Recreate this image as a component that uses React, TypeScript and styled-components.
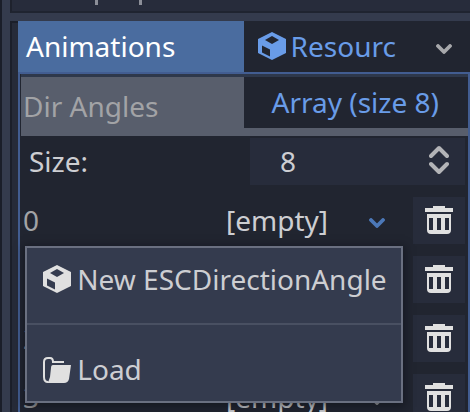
import React from "react";
import styled, { createGlobalStyle } from "styled-components";

const Global = createGlobalStyle`
  * { box-sizing: border-box; }
  body { margin: 0; overflow: hidden; background: #343b4d; }
  svg { display: block; flex: none; }
`;

const Dock = styled.main`
  position: relative;
  width: 470px;
  height: 412px;
  overflow: hidden;
  padding-left: 8px;
  border-left: 2px solid #1a1e29;
  background: #343b4d;
  color: #cdced2;
  font: 28px/38px "Noto Sans", sans-serif;
  white-space: nowrap;
`;

const FilterBar = styled.div`
  display: flex;
  height: 13px;
  padding-left: 83px;
  gap: 41px;
  border-left: 2px solid #1e222d;
  border-bottom: 2px solid #1f2430;
  background: #272c3b;
`;

const Descender = styled.i`
  width: 3px;
  height: 5px;
  background: #8c8f98;
`;

const Inspector = styled.section`
  height: 391px;
  margin-top: 8px;
  padding-left: 6px;
  border-left: 2px solid #1b1f2a;
  background: linear-gradient(#1b1f2a 2px, #262b39 2px);
`;

const PropertyRow = styled.div`
  display: flex;
  height: 51px;
`;

const Name = styled.div`
  width: 226px;
  padding: 6px 0 0 8px;
  background: #4a6c9f;
  color: #fff;
`;

const Value = styled.div`
  display: flex;
  flex: 1;
  padding-left: 14px;
  background: #212530;
  color: #699ce8;
`;

const Label = styled.span<{ $top?: number; $left?: number }>`
  display: block;
  margin-top: ${(p) => p.$top ?? 0}px;
  margin-left: ${(p) => p.$left ?? 0}px;
`;

const Resource = styled.div`
  height: 340px;
  border: 2px solid #425d91;
  border-bottom: 0;
  padding-left: 1px;
  background: #212530;
`;

const ArrayHeader = styled.div`
  display: flex;
  height: 62px;
  border-top: 3px solid #2e384b;
  background: #585e6c;
`;

const ArrayName = styled.div`
  width: 223px;
  padding: 10px 0 0 2px;
  color: #a2a3a6;
`;

const ArrayValue = styled.div`
  flex: 1;
  height: 51px;
  padding: 6px 0 0 27.5px;
  background: #212530;
  color: #699ce8;
`;

const SizeRow = styled.div`
  display: flex;
  height: 61px;
  padding: 2px 3px 12px 8px;
`;

const SizeName = styled.div`
  width: 221px;
  padding-top: 4px;
`;

const Spin = styled.div`
  display: flex;
  width: 215px;
  height: 47px;
  padding: 4px 16px 0 30px;
  justify-content: space-between;
  background: #272c3b;
`;

const SpinArrows = styled.svg`
  margin-top: 1px;
`;

const Item = styled.div`
  display: flex;
  height: 59px;
  padding-right: 3px;
`;

const Index = styled.div`
  width: 205px;
  padding: 4px 0 0 2px;
  color: #a2a3a6;
`;

const Empty = styled.div`
  display: flex;
  width: 187px;
  padding-top: 4px;
`;

const Delete = styled.div`
  width: 52px;
  height: 47px;
  padding: 9px 12px;
  background: #272c3b;
`;

const Menu = styled.div`
  position: absolute;
  left: 23px;
  top: 246px;
  width: 378px;
  height: 157px;
  border: 2px solid #6a7081;
  background: #343b4e;
  box-shadow: 0 2px 8px 2px rgba(12, 14, 22, 0.5);
`;

const MenuItem = styled.div<{ $height: number; $top: number }>`
  display: flex;
  height: ${(p) => p.$height}px;
  padding: ${(p) => p.$top}px 0 0 16px;
`;

const Separator = styled.div`
  height: 2px;
  background: #495062;
`;

const Tint = styled.span<{ $color?: string; $top?: number }>`
  margin-top: ${(p) => p.$top ?? 0}px;
  color: ${(p) => p.$color ?? "#e0e0e0"};
`;

const ChevronSvg = styled.svg<{ $top: number; $left: number }>`
  margin-top: ${(p) => p.$top}px;
  margin-left: ${(p) => p.$left}px;
`;

const Cube = () => (
  <svg width="28" height="28" viewBox="0 0 28 28" fill="currentColor">
    <path fillRule="evenodd" d="M14 0 28 7V21L14 28 0 21V7ZM14 4 7 8 14 12 21 8ZM4 13.5V20.5L12 24.5V17.5Z" />
  </svg>
);

const Folder = () => (
  <svg width="28" height="27" viewBox="0 0 28 27">
    <path d="M5 25C2 25 1 23 1 20V5Q1 1 5 1H7Q10 1 10 5H21" fill="none" stroke="currentColor" strokeWidth="2" />
    <path d="M10 8H28L26 22Q25 26 21 26H4Q6 24 7 20L8 11Q8 8 10 8Z" fill="currentColor" />
  </svg>
);

const Trash = () => (
  <svg width="28" height="28" viewBox="0 0 28 28" fill="#e0e0e0">
    <path d="M8 0H20V2H28V6H0V2H8Z" />
    <path fillRule="evenodd" d="M2 8H26V24Q26 28 22 28H6Q2 28 2 24ZM4 12V24H8V12ZM12 12V24H16V12ZM20 12V24H24V12Z" />
  </svg>
);

const Chevron = ({ color, top, left }: { color: string; top: number; left: number }) => (
  <ChevronSvg $top={top} $left={left} width="16" height="10" viewBox="0 0 16 10">
    <path d="m2 2 6 6 6-6" fill="none" stroke={color} strokeWidth="3.8" strokeLinecap="round" strokeLinejoin="round" />
  </ChevronSvg>
);

export default function App() {
  return (
    <>
      <Global />
      <Dock>
        <FilterBar>
          <Descender />
          <Descender />
        </FilterBar>
        <Inspector>
          <PropertyRow>
            <Name>Animations</Name>
            <Value>
              <Tint $color="#699ce8" $top={11}><Cube /></Tint>
              <Label $top={6} $left={4.6}>Resourc</Label>
              <Chevron color="#a7a8ab" top={23} left={40.4} />
            </Value>
          </PropertyRow>
          <Resource>
            <ArrayHeader>
              <ArrayName>Dir Angles</ArrayName>
              <ArrayValue>Array (size 8)</ArrayValue>
            </ArrayHeader>
            <SizeRow>
              <SizeName>Size:</SizeName>
              <Spin>
                <span>8</span>
                <SpinArrows width="20" height="36" viewBox="0 0 20 36">
                  <path d="m2 13 8-8 8 8M2 21l8 8 8-8" fill="none" stroke="#b3b4b7" strokeWidth="4" strokeLinecap="round" strokeLinejoin="round" />
                </SpinArrows>
              </Spin>
            </SizeRow>
            {[0, 1, 2, 3].map((n) => (
              <Item key={n}>
                <Index>{n}</Index>
                <Empty>
                  <Label>[empty]</Label>
                  <Chevron color={n === 0 ? "#4c78b8" : "#a7a8ab"} top={17} left={41} />
                </Empty>
                <Delete><Trash /></Delete>
              </Item>
            ))}
          </Resource>
        </Inspector>
        <Menu>
          <MenuItem $height={75} $top={17}>
            <Tint><Cube /></Tint>
            <Label $top={-5} $left={6.3}>New ESCDirectionAngle</Label>
          </MenuItem>
          <Separator />
          <MenuItem $height={76} $top={32}>
            <Tint><Folder /></Tint>
            <Label $top={-7} $left={6.3}>Load</Label>
          </MenuItem>
        </Menu>
      </Dock>
    </>
  );
}
